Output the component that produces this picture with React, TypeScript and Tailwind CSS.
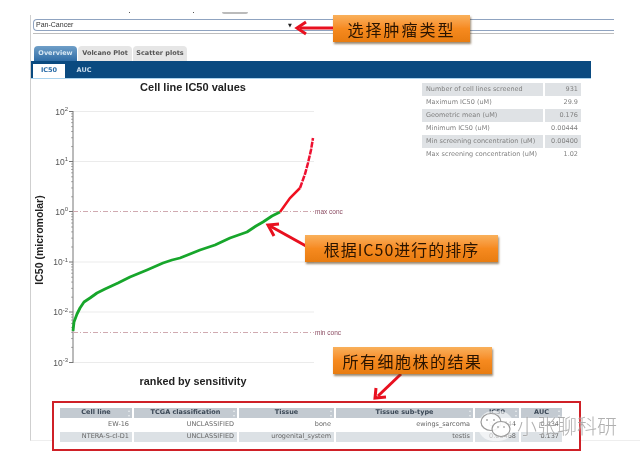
const stats: [string, string][] = [
  ["Number of cell lines screened", "931"],
  ["Maximum IC50 (uM)", "29.9"],
  ["Geometric mean (uM)", "0.176"],
  ["Minimum IC50 (uM)", "0.00444"],
  ["Min screening concentration (uM)", "0.00400"],
  ["Max screening concentration (uM)", "1.02"],
];
const headers = ["Cell line", "TCGA classification", "Tissue", "Tissue sub-type", "IC50", "AUC"];
const rows = [
  ["EW-16", "UNCLASSIFIED", "bone", "ewings_sarcoma", "0.00444", "0.434"],
  ["NTERA-S-cl-D1", "UNCLASSIFIED", "urogenital_system", "testis", "0.00468", "0.137"],
];
const ticks = [111.5, 161.5, 211.5, 262, 312, 362.5];
const labels = ["2", "1", "0", "-1", "-2", "-3"];
const minor: number[] = [];
for (let d = 0; d < 5; d++) {
  for (let m = 2; m < 10; m++) {
    minor.push(362.5 - (d + Math.log10(m)) * 50.2);
  }
}

function Chart() {
  return (
    <svg width="391" height="322" viewBox="31 79 391 322" className="block shrink-0" style={{ fontFamily: "'Liberation Sans', sans-serif" }}>
      <text x="193" y="91" textAnchor="middle" fontSize="11" fontWeight="700" fill="#222">Cell line IC50 values</text>
      {ticks.map((y, i) => (
        <g key={y}>
          {i !== 2 && <line x1="73" x2="314" y1={y} y2={y} stroke="#ebebeb" strokeWidth="1" />}
          <line x1="69" x2="73" y1={y} y2={y} stroke="#777" strokeWidth="1" />
          <text x="68" y={y + 3} textAnchor="end" fontSize="8.5" fill="#555">
            10<tspan fontSize="6" dy="-3.5">{labels[i]}</tspan>
          </text>
        </g>
      ))}
      {minor.map((y) => (
        <line key={y} x1="71" x2="73" y1={y} y2={y} stroke="#999" strokeWidth="0.8" />
      ))}
      <line x1="73" x2="73" y1="111" y2="363" stroke="#777" strokeWidth="1" />
      <line x1="73" x2="314" y1="211.5" y2="211.5" stroke="#d0aab0" strokeWidth="1" strokeDasharray="5 2 1 2" />
      <line x1="73" x2="314" y1="332.5" y2="332.5" stroke="#d0aab0" strokeWidth="1" strokeDasharray="5 2 1 2" />
      <text x="315" y="214" fontSize="6.5" fill="#8a4a60">max conc</text>
      <text x="315" y="335" fontSize="6.5" fill="#8a4a60">min conc</text>
      <polyline
        points="73,331 74,322 77,314 80,308 84,302 90,298 97,293 105,289 118,283 130,277 147,270 163,263 172,260 180,258 200,250 215,245 230,238 247,232 256,226 263,222 272,216 280,212"
        fill="none"
        stroke="#17a62b"
        strokeWidth="2.8"
        strokeLinejoin="round"
      />
      <polyline points="280,212 290,198 300,188" fill="none" stroke="#f0101f" strokeWidth="2.5" />
      <polyline points="300,188 305,174 308,163 311,150 313,138" fill="none" stroke="#ee1030" strokeWidth="2.5" strokeDasharray="6 1" />
      <text x="39" y="236" transform="rotate(-90 43 236)" textAnchor="middle" fontSize="10.5" fontWeight="700" fill="#222">IC50 (micromolar)</text>
      <text x="193" y="385" textAnchor="middle" fontSize="10.8" fontWeight="700" fill="#222">ranked by sensitivity</text>
    </svg>
  );
}

function Callout({ className, text }: { className: string; text: string }) {
  return (
    <div
      className={`absolute flex items-center justify-center h-[27px] text-[16px] text-[#2a1400] bg-gradient-to-b from-[#f9b05a] via-[#f68a1f] to-[#e87c10] shadow-[1px_2px_2px_rgba(90,60,20,0.6)] ${className}`}
      style={{ fontFamily: "'Noto Sans CJK SC', 'Liberation Sans', sans-serif" }}
    >
      {text}
    </div>
  );
}

function Arrows() {
  const red = "#e8101f";
  return (
    <svg width="640" height="459" className="absolute left-0 top-0 pointer-events-none">
      <line x1="334" y1="28" x2="300" y2="28" stroke={red} strokeWidth="3" />
      <polyline points="306,22 297,28 306,34" fill="none" stroke={red} strokeWidth="3" />
      <line x1="306" y1="246" x2="270" y2="226" stroke={red} strokeWidth="3" />
      <polyline points="279,224 268,225 274,236" fill="none" stroke={red} strokeWidth="3" />
      <line x1="401" y1="374" x2="378" y2="396" stroke={red} strokeWidth="3" />
      <polyline points="376,388 375,398 386,397" fill="none" stroke={red} strokeWidth="3" />
    </svg>
  );
}

function Watermark() {
  return (
    <div className="absolute left-[478px] top-[411px] flex items-center">
      <svg width="36" height="30" viewBox="0 0 36 30" fill="none" className="bg-white/60 rounded-full">
        <ellipse cx="13" cy="11" rx="10" ry="8.5" stroke="#9a9a9a" strokeWidth="1.2" fill="rgba(255,255,255,.8)" />
        <ellipse cx="23" cy="18" rx="9" ry="7.5" stroke="#9a9a9a" strokeWidth="1.2" fill="rgba(255,255,255,.9)" />
        <circle cx="9" cy="9" r="1" fill="#aaa" />
        <circle cx="16" cy="9" r="1" fill="#aaa" />
        <circle cx="20" cy="16" r="0.9" fill="#aaa" />
        <circle cx="26" cy="16" r="0.9" fill="#aaa" />
      </svg>
      <span
        className="text-[20px] leading-none text-[#8f8f8f]/70 ml-[3px] font-light [text-shadow:0_0_2px_#fff]"
        style={{ fontFamily: "'Noto Sans CJK SC', sans-serif" }}
      >
        小张聊科研
      </span>
    </div>
  );
}

export default function App() {
  return (
    <div
      className="relative w-[640px] h-[459px] overflow-hidden bg-white blur-[0.35px]"
      style={{ fontFamily: "'DejaVu Sans', Verdana, sans-serif" }}
    >
      <div className="ml-[30px] mt-[15px] w-[610px] h-[426px] border-l border-b border-l-[#cfcfcf] border-b-[#eeeeee]">
        <div className="h-[4px] relative -top-[3px] flex items-start">
          <span className="ml-[98px] w-px h-[1px] bg-[#555]" />
          <span className="ml-[63px] w-px h-[1px] bg-[#555]" />
          <span className="ml-[28px] w-[26px] h-[2px] rounded-b bg-[#bbb]" />
        </div>
        <div className="ml-[2px] w-[581px] h-[12px] border border-r-0 border-[#8fa3c0] rounded-l-sm flex items-center text-[6.5px] text-[#333] pl-[2px]">
          <span className="w-[252px] truncate" style={{ fontFamily: "'Liberation Sans', sans-serif", fontSize: 7 }}>Pan-Cancer</span>
          <span className="text-[5px] text-[#222] leading-none">▼</span>
        </div>
        <div className="ml-[2px] mt-[2px] w-[581px] h-px bg-[#bdbdbd]" />
        <div className="ml-[3px] mt-[12px] h-[15px] flex gap-px text-[6.5px] font-bold">
          <div className="w-[43px] flex items-center justify-center rounded-t-sm bg-gradient-to-b from-[#6f9fc8] to-[#2f6da6] text-[#d8e8f4]">Overview</div>
          <div className="w-[54px] flex items-center justify-center rounded-t-sm bg-[#e6e6e6] text-[#555]">Volcano Plot</div>
          <div className="w-[54px] flex items-center justify-center rounded-t-sm bg-[#e6e6e6] text-[#555]">Scatter plots</div>
        </div>
        <div className="w-[560px] h-[18px] pl-[2px] pt-[3px] flex items-stretch bg-[#0a4a80] border-b border-[#a9d3ee] text-[6.5px] font-bold">
          <div className="w-[32px] bg-white text-[#2a6da8] flex items-center justify-center">IC50</div>
          <div className="w-[38px] text-[#c8dcec] flex items-center justify-center">AUC</div>
        </div>
        <div className="flex h-[322px]">
          <Chart />
          <div className="mt-[4px] w-[159px] text-[6.5px] text-[#808080]">
            {stats.map(([k, v], i) => (
              <div key={k} className="flex gap-[2px] h-[13px]">
                <div className={`w-[121px] h-[13px] pl-[4px] flex items-center whitespace-nowrap ${i % 2 === 0 ? "bg-[#dfe2e5]" : ""}`}>{k}</div>
                <div className={`w-[36px] h-[13px] pr-[3px] flex items-center justify-end ${i % 2 === 0 ? "bg-[#dfe2e5]" : ""}`}>{v}</div>
              </div>
            ))}
          </div>
        </div>
        <div className="ml-[21px] w-[529px] h-[50px] border-2 border-[#cf2027] pl-[6px] pt-[5px] relative bg-white">
          <div className="grid grid-cols-[72px_103px_95px_137px_44px_41px] gap-x-[2px] grid-rows-[10px_14px_10px] text-[6.5px]">
            {headers.map((h) => (
              <div key={h} className="relative flex items-center justify-center bg-[#c3cad1] text-[#3b4856] font-bold whitespace-nowrap">
                {h}
                <span className="absolute right-[2px] top-0 text-[4px] leading-[5px] text-[#e8ecef]">▴<br />▾</span>
              </div>
            ))}
            {rows.map((r, ri) =>
              r.map((c, ci) => (
                <div
                  key={`${ri}-${ci}`}
                  className={`flex items-center justify-end pr-[3px] text-[#666] whitespace-nowrap ${ri === 1 ? "bg-[#dce1e5]" : ""}`}
                >
                  {c}
                </div>
              )),
            )}
          </div>
        </div>
      </div>
      <Arrows />
      <Callout className="left-[333px] top-[15px] w-[137px] tracking-[2px]" text="选择肿瘤类型" />
      <Callout className="left-[305px] top-[235px] w-[193px] tracking-[1px]" text="根据IC50进行的排序" />
      <Callout className="left-[333px] top-[347px] w-[159px] tracking-[1.5px]" text="所有细胞株的结果" />
      <Watermark />
    </div>
  );
}
